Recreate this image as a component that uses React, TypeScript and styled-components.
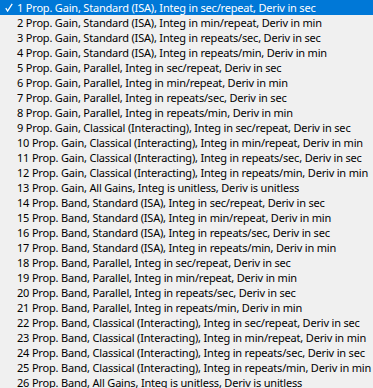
import React from 'react'
import styled, { createGlobalStyle } from 'styled-components'

const GlobalStyle = createGlobalStyle`
  html, body {
    margin: 0;
    padding: 0;
    background: #f0f0f0;
  }
`

const List = styled.ul`
  list-style: none;
  margin: 0;
  padding: 0;
  width: 373px;
  height: 388px;
  overflow: hidden;
  background: #f0f0f0;
  font-family: 'Noto Sans', 'Open Sans', sans-serif;
  font-size: 11px;
  letter-spacing: -0.19px;
`

const Item = styled.li<{ $selected?: boolean }>`
  position: relative;
  height: 15px;
  line-height: 15px;
  padding-left: 17px;
  white-space: nowrap;
  color: ${(p) => (p.$selected ? '#ffffff' : '#000000')};
  background: ${(p) => (p.$selected ? '#0078d7' : 'transparent')};
`

const Check = styled.svg`
  position: absolute;
  left: 5px;
  top: 3px;
  width: 8px;
  height: 9px;
`

const gainTypes = [
  'Standard (ISA)',
  'Parallel',
  'Classical (Interacting)',
]
const units = [
  'Integ in sec/repeat, Deriv in sec',
  'Integ in min/repeat, Deriv in min',
  'Integ in repeats/sec, Deriv in sec',
  'Integ in repeats/min, Deriv in min',
]

const items: string[] = []
for (const prop of ['Gain', 'Band']) {
  for (const g of gainTypes) {
    for (const u of units) items.push(`Prop. ${prop}, ${g}, ${u}`)
  }
  items.push(`Prop. ${prop}, All Gains, Integ is unitless, Deriv is unitless`)
}

export default function App() {
  return (
    <>
      <GlobalStyle />
      <List>
        {items.map((text, i) => (
          <Item key={i} $selected={i === 0}>
            {i === 0 && (
              <Check viewBox='0 0 8 9'>
                <path d='M0.8 5.2 L2.6 8 L7.2 0.8' stroke='#ffffff' strokeWidth='1.3' fill='none' />
              </Check>
            )}
            {i + 1} {text}
          </Item>
        ))}
      </List>
    </>
  )
}
